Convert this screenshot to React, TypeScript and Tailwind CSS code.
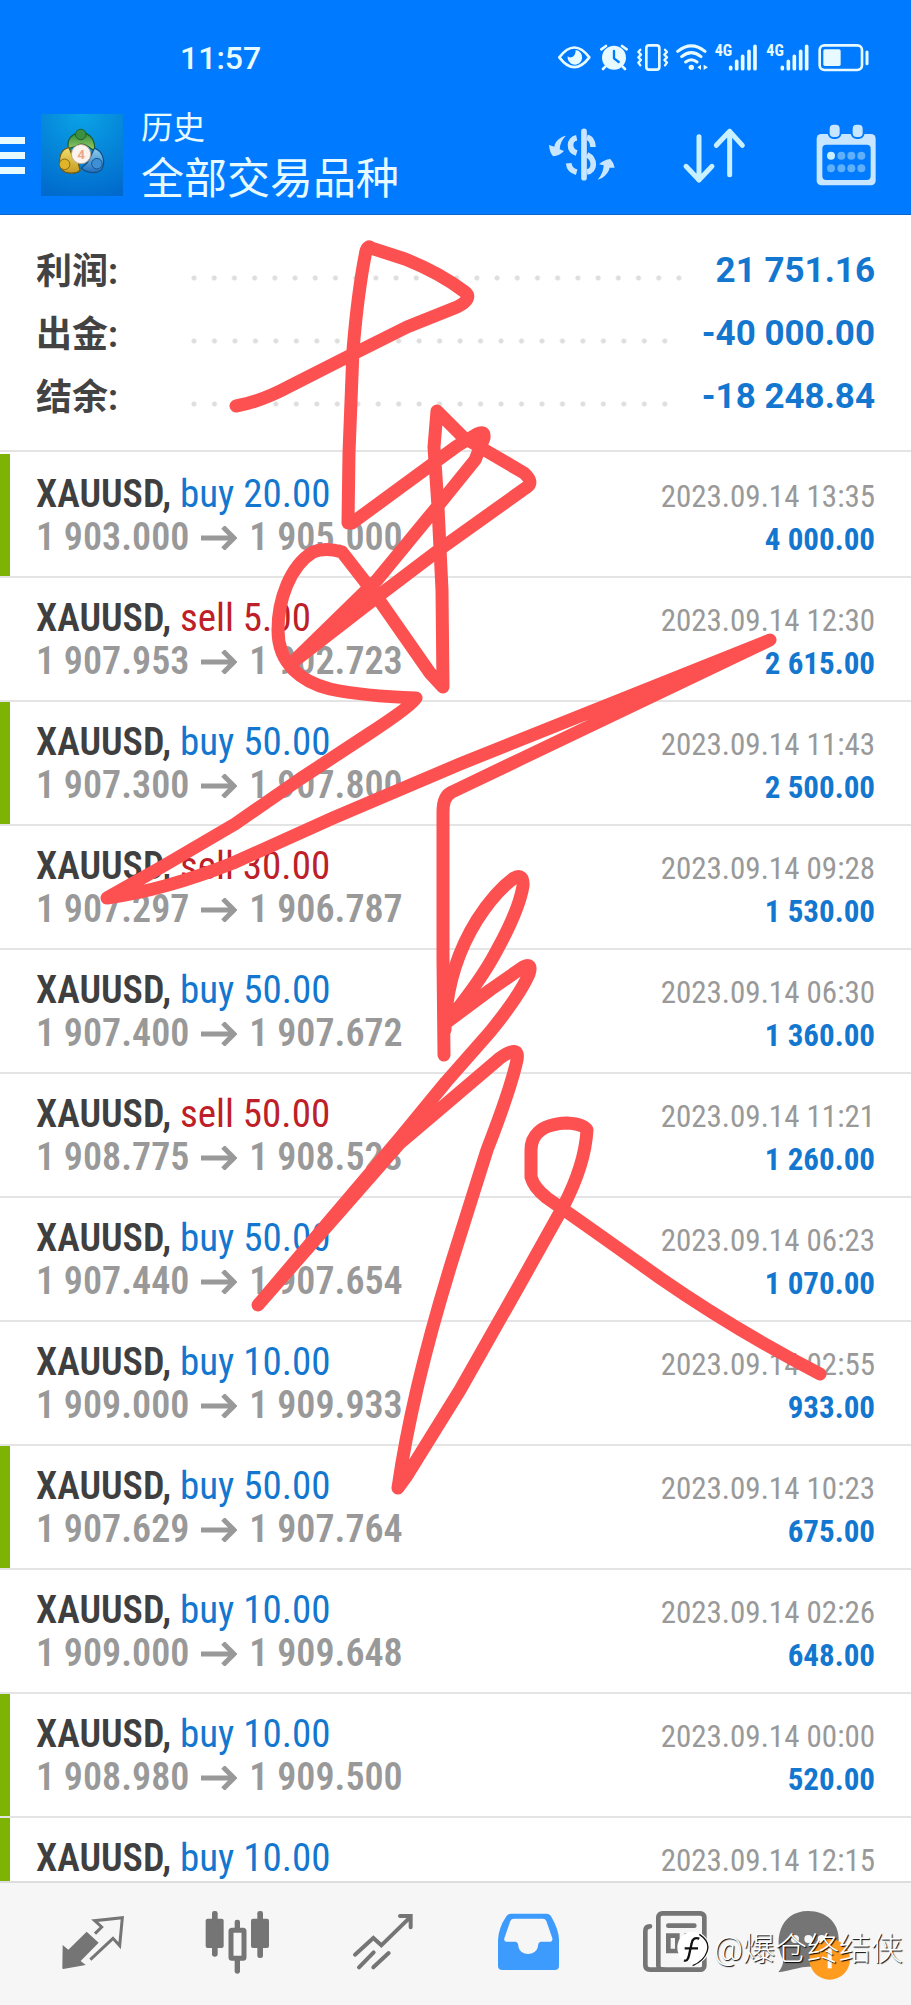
import React from 'react';

const summary = [
  { label: '利润:', value: '21 751.16' },
  { label: '出金:', value: '-40 000.00' },
  { label: '结余:', value: '-18 248.84' },
];

type Deal = {
  side: 'buy' | 'sell';
  volume: string;
  time: string;
  open?: string;
  close?: string;
  profit?: string;
  marked?: boolean;
};

const deals: Deal[] = [
  { side: 'buy', volume: '20.00', open: '1 903.000', close: '1 905.000', time: '2023.09.14 13:35', profit: '4 000.00', marked: true },
  { side: 'sell', volume: '5.00', open: '1 907.953', close: '1 902.723', time: '2023.09.14 12:30', profit: '2 615.00' },
  { side: 'buy', volume: '50.00', open: '1 907.300', close: '1 907.800', time: '2023.09.14 11:43', profit: '2 500.00', marked: true },
  { side: 'sell', volume: '30.00', open: '1 907.297', close: '1 906.787', time: '2023.09.14 09:28', profit: '1 530.00' },
  { side: 'buy', volume: '50.00', open: '1 907.400', close: '1 907.672', time: '2023.09.14 06:30', profit: '1 360.00' },
  { side: 'sell', volume: '50.00', open: '1 908.775', close: '1 908.523', time: '2023.09.14 11:21', profit: '1 260.00' },
  { side: 'buy', volume: '50.00', open: '1 907.440', close: '1 907.654', time: '2023.09.14 06:23', profit: '1 070.00' },
  { side: 'buy', volume: '10.00', open: '1 909.000', close: '1 909.933', time: '2023.09.14 02:55', profit: '933.00' },
  { side: 'buy', volume: '50.00', open: '1 907.629', close: '1 907.764', time: '2023.09.14 10:23', profit: '675.00', marked: true },
  { side: 'buy', volume: '10.00', open: '1 909.000', close: '1 909.648', time: '2023.09.14 02:26', profit: '648.00' },
  { side: 'buy', volume: '10.00', open: '1 908.980', close: '1 909.500', time: '2023.09.14 00:00', profit: '520.00', marked: true },
  { side: 'buy', volume: '10.00', time: '2023.09.14 12:15', marked: true },
];

function StatusIcons() {
  return (
    <svg viewBox="84 126 942 96" className="h-8 w-[314px]" fill="none" stroke="#e6faff" strokeLinecap="round" strokeLinejoin="round">
      {/* eye */}
      <path d="M91 172Q136 113 181 172Q136 231 91 172Z" strokeWidth="8" />
      <path d="M140 150a22 22 0 1 1-24 18c4 8 24 6 24-18Z" fill="#e6faff" stroke="none" />
      {/* alarm */}
      <circle cx="255" cy="173" r="36" fill="#e6faff" stroke="none" />
      <path d="M217 148l14-10M293 148l-14-10M229 200l-7 7M281 200l7 7" strokeWidth="8" />
      <path d="M255 153v22l14 11" stroke="#007aff" strokeWidth="7" />
      {/* vibrate */}
      <rect x="352" y="136" width="39" height="73" rx="8" strokeWidth="8" />
      <path d="M334 149l-6 7 8 8-8 8 8 8-8 8 6 8M408 149l6 7-8 8 8 8-8 8 8 8-6 8" strokeWidth="7" />
      {/* wifi */}
      <path d="M446 154Q487 121 528 154M458 170Q487 146 516 170M470 186Q487 173 504 186" strokeWidth="9" />
      <circle cx="487" cy="202" r="8" fill="#e6faff" stroke="none" />
      <path d="M516 194v16l-11-8zM524 194v16l13-8z" fill="#e6faff" stroke="none" />
      {/* mobile signal, both sims */}
      {[0, 155].map((dx) => (
        <g key={dx} transform={`translate(${dx} 0)`}>
          <text x="557" y="168" fontSize="48" fontWeight="700" fontFamily="Roboto Condensed" fill="#e6faff" stroke="none">4G</text>
          <path d="M605 202v4M623 184v22M641 169v37M660 154v52M678 139v67" strokeWidth="11" />
        </g>
      ))}
      {/* battery */}
      <rect x="872" y="136" width="127" height="74" rx="14" strokeWidth="8" />
      <rect x="883" y="148" width="52" height="50" rx="5" fill="#e6faff" stroke="none" />
      <path d="M1014 156v35" strokeWidth="9" />
    </svg>
  );
}

function AppLogo() {
  return (
    <svg viewBox="0 0 264 264" className="size-[82px] shrink-0">
      <defs>
        <radialGradient id="tile" cx="0.5" cy="0" r="1.1">
          <stop offset="0" stopColor="#0aa3e6" />
          <stop offset="1" stopColor="#0068cc" />
        </radialGradient>
        <linearGradient id="green" x1="0" y1="0" x2="0" y2="1">
          <stop offset="0" stopColor="#2f8a3c" />
          <stop offset="1" stopColor="#9ccf6a" />
        </linearGradient>
        <linearGradient id="gold" x1="0" y1="0" x2="0" y2="1">
          <stop offset="0" stopColor="#efe06a" />
          <stop offset="1" stopColor="#c79a22" />
        </linearGradient>
        <linearGradient id="sky" x1="0" y1="0" x2="0" y2="1">
          <stop offset="0" stopColor="#8fd0f0" />
          <stop offset="1" stopColor="#1f6fc0" />
        </linearGradient>
      </defs>
      <rect width="264" height="264" fill="url(#tile)" />
      <path d="M88 112C82 80 100 62 128 60C158 60 176 84 172 118L150 104Q130 90 112 104Z" fill="url(#green)" stroke="#1f5c2a" strokeWidth="4" />
      <path d="M90 108C62 112 52 150 66 178C80 194 112 194 126 182L120 158L104 142Z" fill="url(#gold)" stroke="#6c5a14" strokeWidth="4" />
      <path d="M172 110C200 120 210 156 194 180C176 194 146 190 130 174L148 158L160 136Z" fill="url(#sky)" stroke="#174f86" strokeWidth="4" />
      <circle cx="128" cy="66" r="17" fill="#3a8f40" stroke="#1f5c2a" strokeWidth="3" />
      <circle cx="76" cy="162" r="17" fill="#e0b429" stroke="#7c6414" strokeWidth="3" />
      <circle cx="180" cy="160" r="17" fill="#3d8fd6" stroke="#174f86" strokeWidth="3" />
      <circle cx="129" cy="129" r="31" fill="#fdf3ee" stroke="#b9a890" strokeWidth="3" />
      <text x="129" y="145" textAnchor="middle" fontSize="44" fontWeight="700" fontFamily="Roboto" fill="#e9a988">4</text>
    </svg>
  );
}

function CurrencyIcon() {
  return (
    <svg viewBox="58 366 198 192" className="h-16 w-[66px]" fill="none" stroke="#c8e6ff" strokeWidth="17">
      <path d="M163 391v139" strokeLinecap="round" />
      <path d="M141 410C117 415 116 448 141 456M172 409Q189 413 190 438M172 461C198 474 196 510 172 513M117 487Q119 508 141 514" />
      <path d="M109 404C93 407 76 420 74 437L58 432Q60 455 70 466Q90 464 103 450L90 445C91 428 98 414 109 404ZM204 536C220 532 236 518 240 500L255 500Q252 484 242 474Q222 476 208 490L222 493C221 510 214 526 204 536Z" fill="#c8e6ff" stroke="none" />
    </svg>
  );
}

function SortIcon() {
  return (
    <svg viewBox="451 366 198 192" className="h-16 w-[66px]" fill="none" stroke="#c8f0ff" strokeWidth="15" strokeLinecap="round" strokeLinejoin="round">
      <path d="M505 407v130M466 496l39 41 39-41M597 521V391M557 433l40-42 38 42" />
    </svg>
  );
}

function CalendarIcon() {
  return (
    <svg viewBox="847 366 198 192" className="h-16 w-[66px]">
      <rect x="858" y="399" width="177" height="154" rx="14" fill="#c8e6ff" />
      <rect x="875" y="431" width="145" height="106" rx="12" fill="#007aff" />
      <rect x="894" y="368" width="36" height="43" rx="15" fill="#c8e6ff" stroke="#007aff" strokeWidth="6" />
      <rect x="963" y="368" width="36" height="43" rx="15" fill="#c8e6ff" stroke="#007aff" strokeWidth="6" />
      {[464, 502].map((y) =>
        [901, 932, 962, 992].map((x) => (
          <circle key={`${x}-${y}`} cx={x} cy={y} r="12" fill={x === 901 && y === 464 ? '#c8f0ff' : '#5fb0fa'} />
        ))
      )}
    </svg>
  );
}

const tabs = [
  {
    name: '行情',
    icon: (
      <svg viewBox="171 138 216 216" className="size-[72px]">
        <path d="M188 255l17 14 55-54 36 33-54 55 15 12-67 12q-3 0-3-3z" fill="#757575" />
        <path d="M285 221l20-20-21-19 83-9-8 84-20-22-68 64" fill="none" stroke="#757575" strokeWidth="9" />
      </svg>
    ),
  },
  {
    name: '图表',
    icon: (
      <svg viewBox="606 138 216 216" className="size-[72px]" fill="#757575">
        <rect x="617" y="176" width="54" height="88" rx="6" />
        <rect x="636" y="153" width="17" height="137" rx="7" />
        <rect x="753" y="176" width="54" height="88" rx="6" />
        <rect x="772" y="153" width="17" height="141" rx="7" />
        <rect x="704" y="179" width="16" height="162" rx="7" />
        <rect x="693" y="211" width="39" height="84" rx="3" fill="#f6f6f6" stroke="#757575" strokeWidth="15" />
      </svg>
    ),
  },
  {
    name: '交易',
    icon: (
      <svg viewBox="1041 138 216 216" className="size-[72px]" fill="none" stroke="#757575" strokeWidth="12" strokeLinecap="round">
        <path d="M1065 284l55-50 24 22 86-84M1200 168h32v34M1077 322l44-45M1120 322l46-43" />
      </svg>
    ),
  },
  {
    name: '历史',
    icon: (
      <svg viewBox="126 258 216 216" className="size-[72px]">
        <path d="M183 281H289Q299 281 304 290Q327 330 327 360V437Q327 450 314 450H157Q144 450 144 437V360Q145 325 168 290Q173 281 183 281ZM192 296Q184 296 181 303L163 355Q161 365 170 365H197Q204 366 205 378C208 410 260 410 264 378Q265 366 272 365H301Q309 365 307 355L289 303Q286 296 278 296Z" fill="#3d9bfd" fillRule="evenodd" />
      </svg>
    ),
  },
  {
    name: '新闻',
    icon: (
      <svg viewBox="561 258 216 216" className="size-[72px]" fill="none" stroke="#757575" strokeWidth="14" strokeLinecap="round">
        <rect x="625" y="280" width="138" height="169" rx="12" />
        <path d="M600 319Q586 319 586 334V436Q586 449 600 449H640M655 317h78M708 347h25M708 372h25M708 393h25" />
        <path d="M655 347h27v46h-27z" />
      </svg>
    ),
  },
  {
    name: '消息',
    icon: (
      <svg viewBox="996 258 216 216" className="size-[72px] overflow-visible">
        <path d="M1075 273C1130 273 1166 310 1166 356C1166 405 1130 440 1075 440C1050 440 1030 450 985 457Q999 440 1000 420C970 370 985 273 1075 273Z" fill="#757575" />
        <g fill="#f6f6f6">
          <circle cx="1035" cy="357" r="12" />
          <circle cx="1075" cy="357" r="12" />
          <circle cx="1115" cy="357" r="12" />
        </g>
        <circle cx="1139" cy="418" r="61" fill="#ff9c1f" />
        <path d="M1139 385v60" stroke="#fff" strokeWidth="12" />
      </svg>
    ),
  },
];

function Scribble() {
  return (
    <svg
      viewBox="0 0 911 2005"
      preserveAspectRatio="none"
      className="pointer-events-none absolute inset-0 h-full w-full"
      fill="none"
      stroke="#fd5151"
      strokeWidth="13"
      strokeLinecap="round"
      strokeLinejoin="round"
    >
      <path d="M236 406Q260 402 290 386L355 353L407 327L457 307Q473 299 465 292Q440 273 405 259L371 248Q368 245 366 251Q358 290 353 350L349 453L348 523H352L457 446L477 434Q485 430 484 438L475 460L437 507L377 580L293 662L373 600L443 547L527 487Q534 482 524 473L483 449L463 437L437 411L434 447L438 507L442 590L443 687L430 673L377 597L342 552Q325 547 313 552C290 566 278 600 278 630C278 665 303 682 330 689Q363 696 416 698Q413 705 367 735L300 779L235 824L165 865L107 898Q165 890 233 863L333 818L460 764L770 640L523 758L452 792Q443 796 443 812V960L444 1055" />
      <path d="M445 1030Q446 970 477 920Q495 892 514 878Q524 873 523 886Q519 910 497 950Q483 977 455 1012L447 1022L490 990L523 967Q533 962 529 974Q520 995 490 1032L446 1082L400 1138L258 1305L400 1143L446 1104L500 1058Q520 1044 517 1060Q511 1088 487 1150L453 1258Q412 1390 398 1488L406 1477L460 1390L520 1284L563 1207Q585 1165 587 1130Q584 1124 567 1123C538 1124 531 1138 531 1150V1177Q534 1188 547 1198Q600 1235 660 1278Q735 1330 820 1374" />
    </svg>
  );
}

export default function App() {
  return (
    <div className="relative flex h-screen flex-col overflow-hidden bg-white font-['Roboto','Noto_Sans_CJK_SC',sans-serif]">
      <header className="shrink-0 border-b border-[#0a66c8] bg-[#007aff] pb-2 text-[#e6faff]">
        <div className="flex h-[104px] items-center justify-between pt-3 pr-10 pl-45">
          <span className="text-[32px] font-medium">11:57</span>
          <StatusIcons />
        </div>
        <div className="flex items-center pr-8">
          <button aria-label="菜单" className="flex w-[25px] shrink-0 flex-col gap-2">
            <span className="h-[7px] w-full bg-[#e6faff]" />
            <span className="h-[7px] w-full bg-[#e6faff]" />
            <span className="h-[7px] w-full bg-[#e6faff]" />
          </button>
          <div className="ml-4">
            <AppLogo />
          </div>
          <div className="ml-[18px] flex-1">
            <p className="text-[32px] leading-[48px]">历史</p>
            <h1 className="text-[43px] leading-[54px]">全部交易品种</h1>
          </div>
          <div className="flex gap-[66px]">
            <button aria-label="货币"><CurrencyIcon /></button>
            <button aria-label="排序"><SortIcon /></button>
            <button aria-label="日期"><CalendarIcon /></button>
          </div>
        </div>
      </header>

      <dl className="shrink-0 border-b-2 border-[#e4e4e4] px-9 pt-[25px] pb-[21px]">
        {summary.map((item) => (
          <div key={item.label} className="flex h-[63px] items-center">
            <dt className="w-[155px] text-[36px] font-bold text-[#434343]">{item.label}</dt>
            <dd className="flex flex-1 items-center gap-5 text-[35px] font-bold text-[#1377d0]">
              <span className="mt-3 h-[6px] flex-1 bg-[radial-gradient(circle_at_3px_3px,#dedede_2px,transparent_3px)] bg-[length:20px_6px] [background-repeat:space_no-repeat]" />
              {item.value}
            </dd>
          </div>
        ))}
      </dl>

      <main className="min-h-0 flex-1 overflow-hidden pt-0.5 font-['Roboto_Condensed','Roboto',sans-serif]">
        <ul>
          {deals.map((deal, index) => (
            <li key={index} className="flex h-[124px] border-b-2 border-[#e4e4e4]">
              <span className={`w-[10px] shrink-0 ${deal.marked ? 'bg-[#7cb305]' : ''}`} />
              <div className="flex-1 pt-[19px] pr-9 pl-[26px]">
                <div className="flex h-[43px] items-baseline justify-between leading-[43px]">
                  <p className="text-[38px] font-semibold text-[#3f3f3f]">
                    XAUUSD,{' '}
                    <span className={`text-[39px] font-normal ${deal.side === 'buy' ? 'text-[#1377d0]' : 'text-[#bd2028]'}`}>
                      {deal.side} {deal.volume}
                    </span>
                  </p>
                  <time className="text-[31px] text-[#999999]">{deal.time}</time>
                </div>
                {deal.profit && (
                  <div className="flex h-[43px] items-baseline justify-between leading-[43px]">
                    <p className="flex items-center text-[38px] font-semibold text-[#999999]">
                      {deal.open}
                      <svg viewBox="0 0 36 24" className="mx-3 h-6 w-9" fill="none" stroke="#999999" strokeWidth="5">
                        <path d="M0 12h33M22 1l11 11-11 11" />
                      </svg>
                      {deal.close}
                    </p>
                    <strong className="text-[31px] font-bold text-[#1377d0]">{deal.profit}</strong>
                  </div>
                )}
              </div>
            </li>
          ))}
        </ul>
      </main>

      <nav className="relative h-[124px] shrink-0 border-t-2 border-[#dddddd] bg-[#f6f6f6] px-5 pb-1">
        <div className="grid h-full grid-cols-6 place-items-center">
          {tabs.map((tab) => (
            <button key={tab.name} aria-label={tab.name}>{tab.icon}</button>
          ))}
        </div>
        <div className="absolute right-2 bottom-9 flex items-center gap-1 text-[32px] leading-10 font-light text-white [text-shadow:1px_1px_1px_#000]">
          <svg viewBox="672 348 102 108" className="h-9 w-[34px]">
            <path d="M724 350A47 47 0 0 0 700 438V448Q708 443 712 436Q722 446 720 453Q772 440 771 397Q768 352 724 350Z" fill="#fff" />
            <path d="M742 358Q776 380 765 410Q756 438 722 452" fill="none" stroke="#111" strokeWidth="4" />
            <path d="M742 371Q722 364 719 385L710 425Q706 440 696 436M698 400h40" fill="none" stroke="#111" strokeWidth="7" />
          </svg>
          @爆仓终结侠
        </div>
      </nav>

      <Scribble />
    </div>
  );
}
